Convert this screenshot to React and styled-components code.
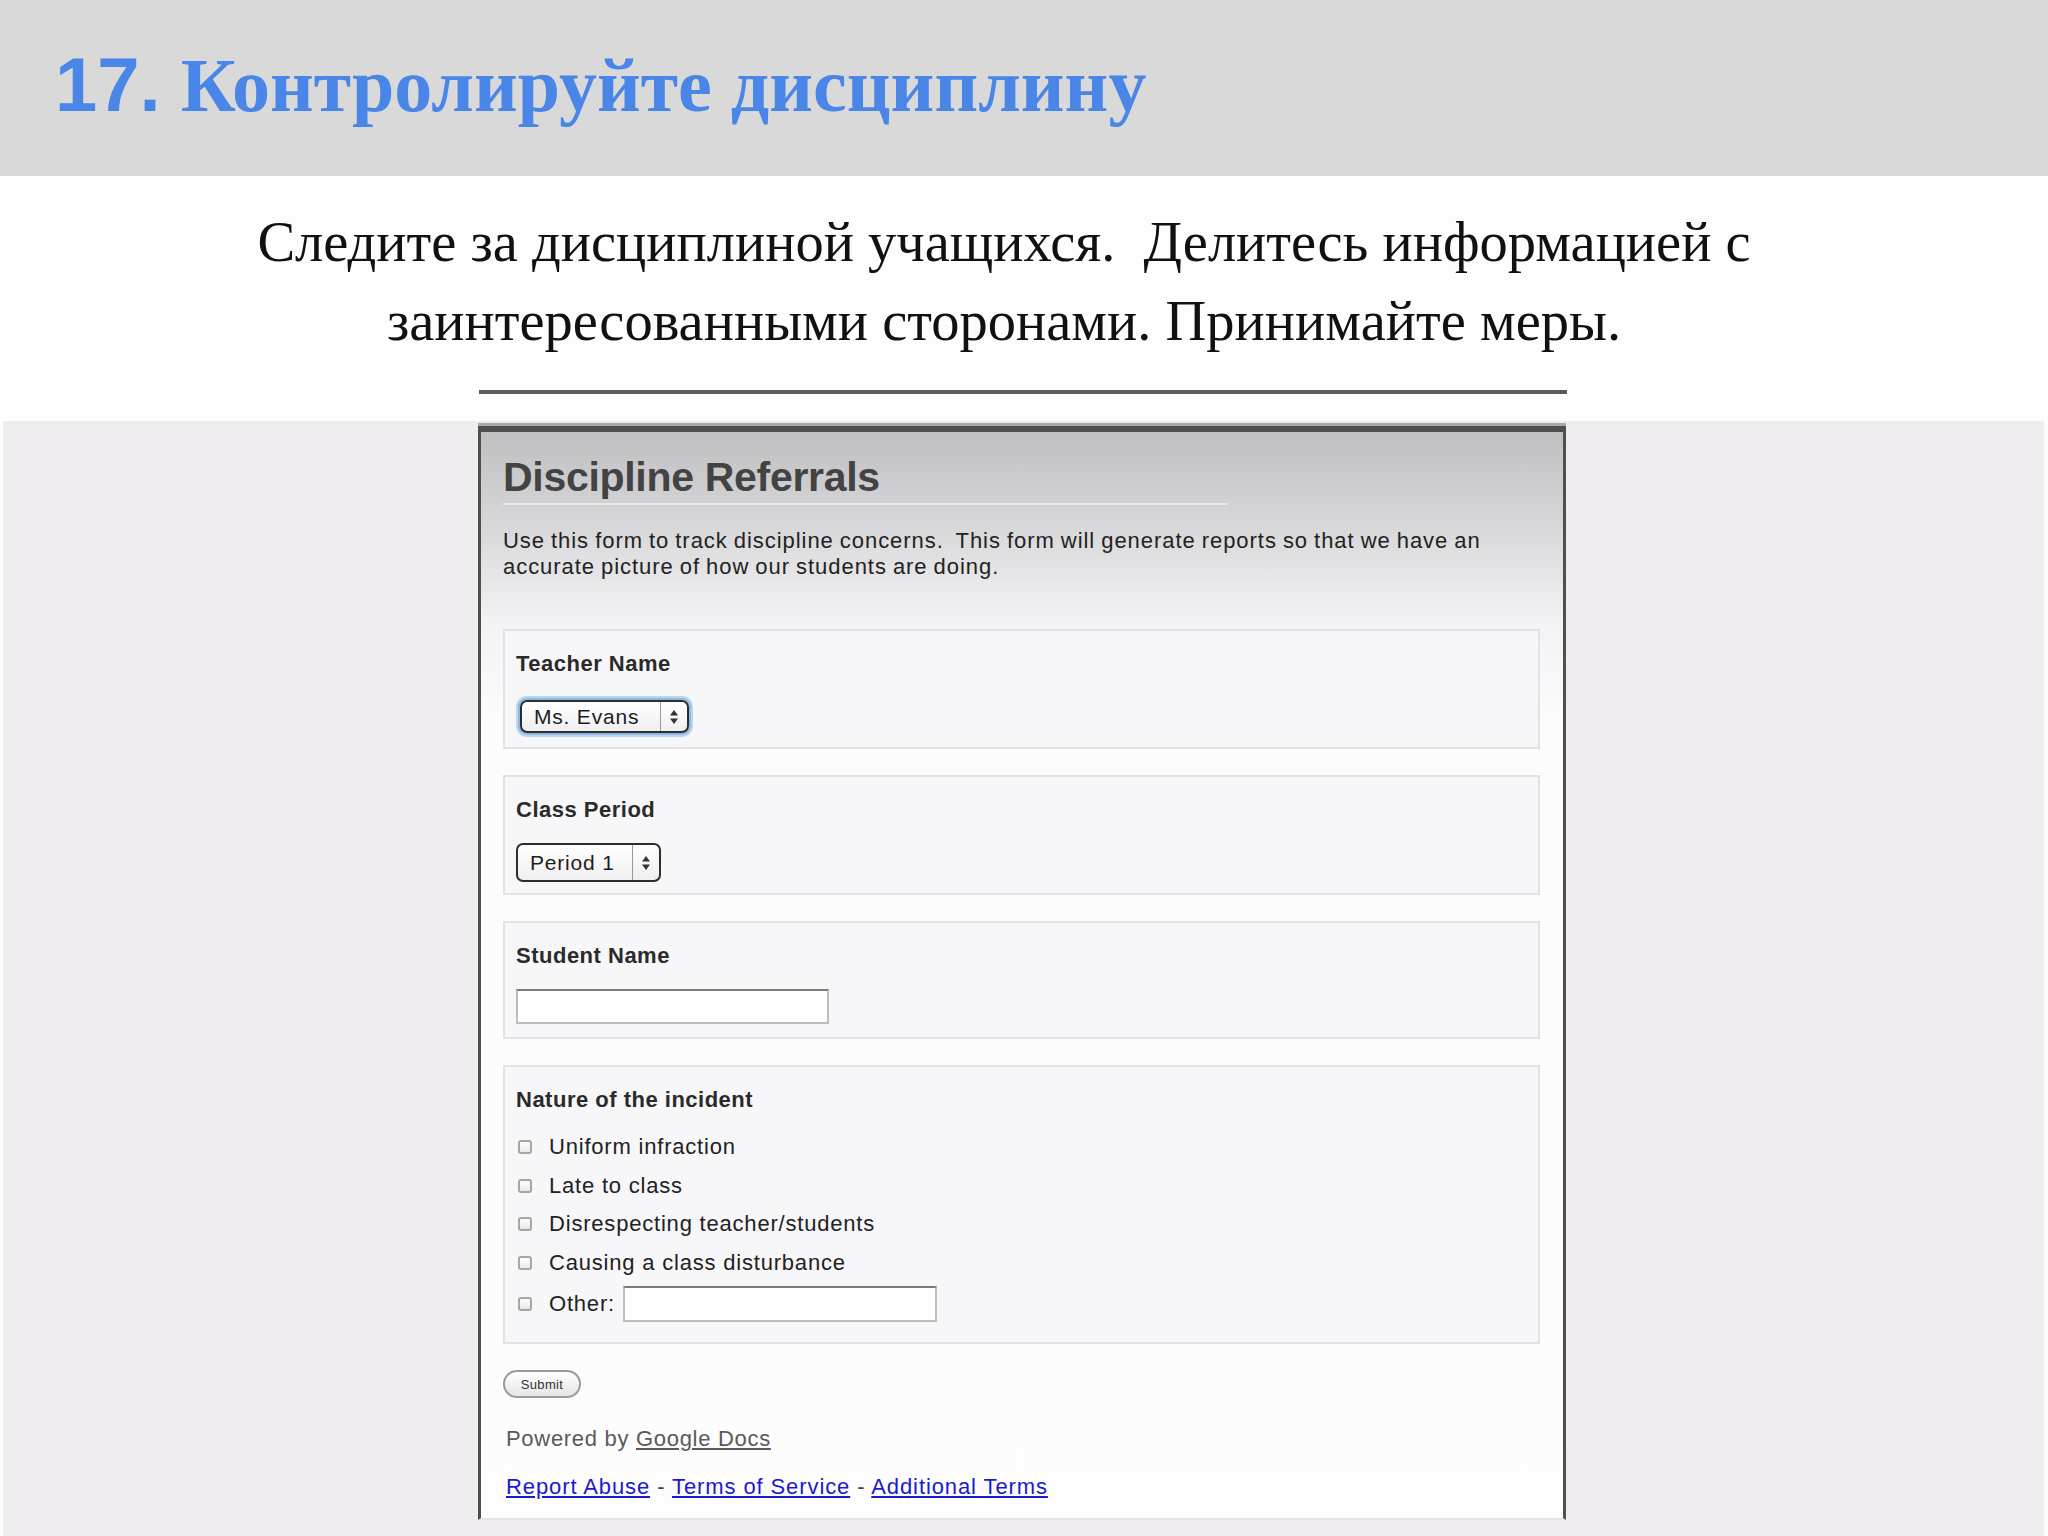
import styled, { createGlobalStyle } from "styled-components";

const Global = createGlobalStyle`
  html, body {
    margin: 0;
    padding: 0;
    background: #ffffff;
  }
  body {
    width: 2048px;
    height: 1536px;
    overflow: hidden;
  }
`

const Slide = styled.div`
  width: 2048px;
  height: 1536px;
  display: flex;
  flex-direction: column;
  background: #fdfdfd;
`

const Banner = styled.header`
  height: 176px;
  box-sizing: border-box;
  padding: 40px 0 0 55px;
  background: #d9d9d9;
  flex-shrink: 0;
`

const Title = styled.h1`
  margin: 0;
  font-family: "Liberation Serif", "Times New Roman", serif;
  font-weight: 700;
  font-size: 76px;
  line-height: 90px;
  color: #4a86e8;
  white-space: nowrap;

  span {
    font-family: "Liberation Sans", Arial, sans-serif;
    margin-right: 20px;
  }
`

const Intro = styled.section`
  height: 245px;
  box-sizing: border-box;
  padding-top: 27px;
  display: flex;
  flex-direction: column;
  align-items: center;
  flex-shrink: 0;
`

const Lead = styled.p`
  margin: 0 40px 0 0;
  font-family: "Liberation Serif", "Times New Roman", serif;
  font-size: 56.5px;
  line-height: 79px;
  color: #111;
  text-align: center;
  white-space: pre;
`

const Rule = styled.div`
  width: 1088px;
  height: 4px;
  margin-top: 29px;
  margin-left: -2px;
  background: #5c5c5c;
`

const Shot = styled.section`
  flex: 1;
  margin: 0 4px 0 3px;
  padding-top: 5px;
  background: #efedf0;
  display: flex;
  justify-content: center;
`

const Form = styled.div`
  width: 1088px;
  height: 1094px;
  box-sizing: border-box;
  margin-left: -3px;
  border: 3px solid #4f4f50;
  border-top: 6px solid #4f4f50;
  border-bottom: 2px solid #e4e3e6;
  box-shadow: 0 -3px 0 #a9a8aa;
  padding: 21px 20px 0 22px;
  font-family: "Liberation Sans", Arial, Helvetica, sans-serif;
  background: linear-gradient(#bfbec0 0px, #dcdbdd 110px, #f3f2f5 190px, #fcfcfd 290px, #fdfdfe 100%);
`

const FormTitle = styled.h2`
  width: 724px;
  margin: 0;
  padding-bottom: 2px;
  border-bottom: 2px solid #e9e8ea;
  font-size: 41px;
  line-height: 48px;
  font-weight: 700;
  color: #434343;
  letter-spacing: -0.3px;
`

const Desc = styled.p`
  margin: 23px 0 0;
  width: 1025px;
  font-size: 22px;
  line-height: 26px;
  color: #222;
  letter-spacing: 0.95px;
  word-spacing: -1px;
  white-space: pre-wrap;
`

const Field = styled.div`
  width: 1037px;
  box-sizing: border-box;
  margin-top: ${(p) => p.$gap}px;
  height: ${(p) => p.$h}px;
  padding: 20px 11px 0 11px;
  border: 2px solid #e2e1e4;
  background: #f7f6f9;
`

const Label = styled.div`
  font-size: 22px;
  line-height: 26px;
  font-weight: 700;
  color: #2a2a2a;
  letter-spacing: 0.5px;
`

const SelectBox = styled.div`
  margin-top: ${(p) => p.$gap}px;
  width: ${(p) => p.$w}px;
  height: ${(p) => p.$h}px;
  box-sizing: border-box;
  display: flex;
  align-items: stretch;
  border: 2px solid #2d2d2d;
  border-radius: 7px;
  background: linear-gradient(#ffffff, #efeff1);
  box-shadow: ${(p) => (p.$focus ? "0 0 0 2px #8fb9e0, 0 0 0 4px #bcd6ee" : "none")};
  margin-left: ${(p) => (p.$focus ? 4 : 0)}px;
  font-size: 21px;
  color: #1d1d1d;
`

const SelectText = styled.div`
  flex: 1;
  display: flex;
  align-items: center;
  padding-left: 12px;
  letter-spacing: 0.8px;
  border-right: 1px solid #9a9a9a;
`

const SelectArrows = styled.div`
  width: 26px;
  display: flex;
  align-items: center;
  justify-content: center;
`

const TextBox = styled.div`
  margin-top: ${(p) => p.$gap || 0}px;
  width: ${(p) => p.$w}px;
  height: ${(p) => p.$h}px;
  box-sizing: border-box;
  background: #ffffff;
  border: 2px solid #bdbdbd;
  border-top-color: #7a7a7a;
`

const Options = styled.div`
  margin-top: 15px;
  display: flex;
  flex-direction: column;
`

const Option = styled.div`
  display: flex;
  align-items: center;
  height: ${(p) => p.$h || 38.5}px;
  font-size: 22px;
  color: #222;
  letter-spacing: 0.8px;
`

const Check = styled.span`
  width: 14px;
  height: 14px;
  box-sizing: border-box;
  margin: 0 17px 0 2px;
  border: 2px solid #a6a6a6;
  border-radius: 3px;
  background: linear-gradient(#ffffff, #e9e9e9);
  flex-shrink: 0;
`

const OtherText = styled.span`
  margin-right: 8px;
`

const Submit = styled.button`
  margin-top: 26px;
  width: 78px;
  height: 28px;
  padding: 0;
  border: 2px solid #9b9b9b;
  border-radius: 14px;
  background: linear-gradient(#ffffff, #e6e6e6);
  font-family: "Liberation Sans", Arial, sans-serif;
  font-size: 13px;
  color: #333;
  letter-spacing: 0.3px;
`

const Powered = styled.div`
  margin-top: 28px;
  margin-left: 3px;
  font-size: 22px;
  line-height: 26px;
  color: #5a5a5a;
  letter-spacing: 0.7px;

  a {
    color: #5a5a5a;
    text-decoration: underline;
  }
`

const Links = styled.div`
  margin-top: 22px;
  margin-left: 3px;
  font-size: 22px;
  line-height: 26px;
  color: #444;
  letter-spacing: 0.9px;

  a {
    color: #1a1ad0;
    text-decoration: underline;
  }
`

const Arrows = () => (
  <svg width="10" height="16" viewBox="0 0 10 16">
    <path d="M5 1 L9 6.5 L1 6.5 Z" fill="#333" />
    <path d="M5 15 L9 9.5 L1 9.5 Z" fill="#333" />
  </svg>
)

const Select = ({ value, w, h, gap, focus }) => (
  <SelectBox $w={w} $h={h} $gap={gap} $focus={focus}>
    <SelectText>{value}</SelectText>
    <SelectArrows>
      <Arrows />
    </SelectArrows>
  </SelectBox>
)

const incidents = [
  "Uniform infraction",
  "Late to class",
  "Disrespecting teacher/students",
  "Causing a class disturbance",
]

export default function App() {
  return (
    <>
      <Global />
      <Slide>
        <Banner>
          <Title>
            <span>17.</span>Контролируйте дисциплину
          </Title>
        </Banner>
        <Intro>
          <Lead>{"Следите за дисциплиной учащихся.  Делитесь информацией с"}</Lead>
          <Lead>заинтересованными сторонами. Принимайте меры.</Lead>
          <Rule />
        </Intro>
        <Shot>
          <Form>
            <FormTitle>Discipline Referrals</FormTitle>
            <Desc>
              {"Use this form to track discipline concerns.  This form will generate reports so that we have an accurate picture of how our students are doing."}
            </Desc>
            <Field $gap={49} $h={120}>
              <Label>Teacher Name</Label>
              <Select value="Ms. Evans" w={169} h={33} gap={23} focus />
            </Field>
            <Field $gap={26} $h={120}>
              <Label>Class Period</Label>
              <Select value="Period 1" w={145} h={39} gap={20} />
            </Field>
            <Field $gap={26} $h={118}>
              <Label>Student Name</Label>
              <TextBox $w={313} $h={35} $gap={20} />
            </Field>
            <Field $gap={26} $h={279}>
              <Label>Nature of the incident</Label>
              <Options>
                {incidents.map((item) => (
                  <Option key={item}>
                    <Check />
                    {item}
                  </Option>
                ))}
                <Option $h={44}>
                  <Check />
                  <OtherText>Other:</OtherText>
                  <TextBox $w={314} $h={36} />
                </Option>
              </Options>
            </Field>
            <Submit>Submit</Submit>
            <Powered>
              Powered by <a>Google Docs</a>
            </Powered>
            <Links>
              <a>Report Abuse</a> - <a>Terms of Service</a> - <a>Additional Terms</a>
            </Links>
          </Form>
        </Shot>
      </Slide>
    </>
  )
}
